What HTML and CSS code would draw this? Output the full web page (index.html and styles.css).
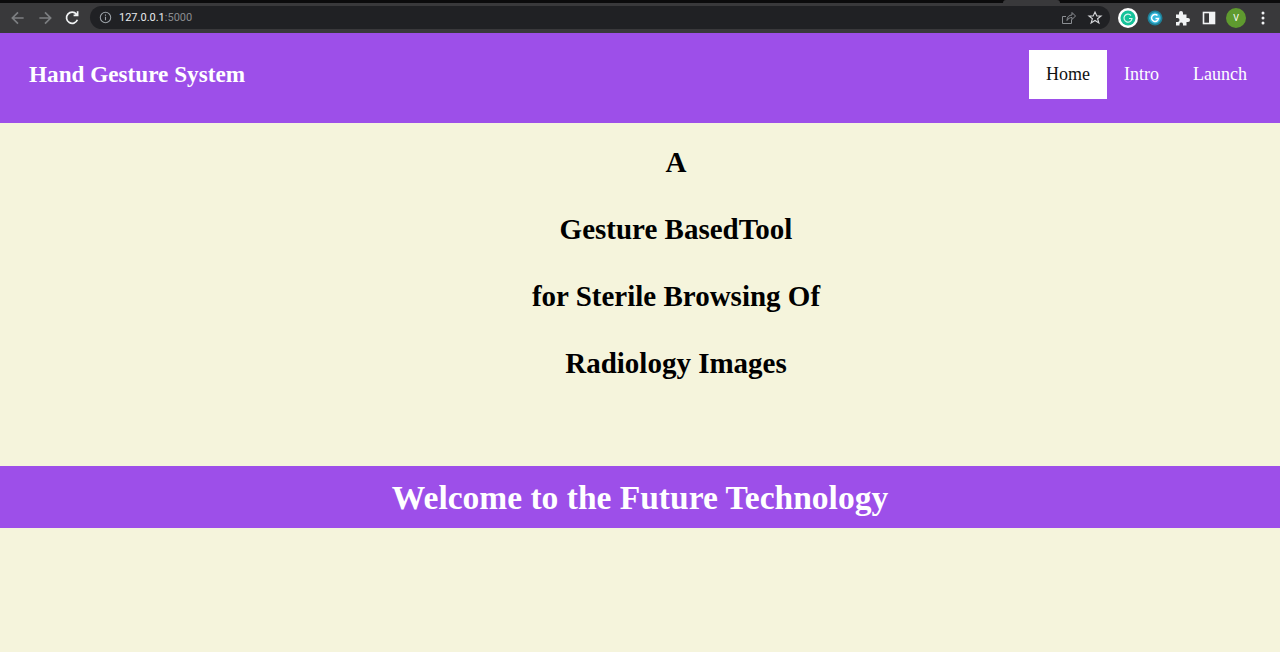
FILE: index.html
```html
<!DOCTYPE html>
<html lang="en">
<head>
    <meta charset="UTF-8">
    <meta name="viewport" content="width=device-width, initial-scale=1.0">
    <title>Hand Gesture System</title>
    <link rel="stylesheet" href="styles.css">
</head>
<body>
    <div class="browser-bar">
        <div class="tab-strip"><div class="tab"></div></div>
        <div class="toolbar">
            <svg class="tool-icon dim" viewBox="0 0 16 16"><path d="M13 8H3.500M8 3 3 8l5 5"/></svg>
            <svg class="tool-icon dim" viewBox="0 0 16 16"><path d="M3 8h9.500M8 3l5 5-5 5"/></svg>
            <svg class="tool-icon" viewBox="0 0 16 16"><path d="M12.800 9.600A5 5 0 1 1 12 4.600M13 2v3.600H9.400"/></svg>
            <div class="address">
                <svg class="info-icon" viewBox="0 0 12 12"><circle cx="6" cy="6" r="4.800"/><path d="M6 5.400v3.200M6 3.200v1.200"/></svg>
                <span class="host">127.0.0.1</span><span class="port">:5000</span>
                <div class="address-end">
                    <svg class="small-icon" viewBox="0 0 16 16"><path d="M11.500 9.500V13.500H2.500V6.500H6M7 10.500c0-3.500 2-5.500 5-5.500V2.500L15.500 6 12 9.500V7.500c-2 0-4 1-5 3z"/></svg>
                    <svg class="small-icon bright" viewBox="0 0 16 16"><path d="m8 2 1.800 4h4.200l-3.400 2.700 1.300 4.300L8 10.500 4.100 13l1.300-4.300L2 6h4.200z"/></svg>
                </div>
            </div>
            <div class="extensions">
                <svg class="ext" viewBox="0 0 20 20"><circle cx="10" cy="10" r="10" fill="#fff"/><circle cx="10" cy="10" r="7.500" fill="#15c39a"/><path d="M13 7.500A4 4 0 1 0 14 10.500h-3" fill="none" stroke="#d8f5ee" stroke-width="1.200"/></svg>
                <svg class="ext" viewBox="0 0 20 20"><circle cx="10" cy="10" r="7.500" fill="#1f7f96"/><circle cx="10" cy="10" r="5.800" fill="#35b8dc"/><path d="M12.500 7.500A3.500 3.500 0 1 0 13.500 10.500h-3" fill="none" stroke="#fff" stroke-width="1.500"/></svg>
                <svg class="ext" viewBox="0 0 20 20"><path fill="#f1f3f4" d="M4 6.500h3V5a2 2 0 0 1 4 0v1.500h3.500V10H16a2 2 0 0 1 0 4h-1.500v3.500H11V16a1.800 1.800 0 0 0-3.500 0v1.500H4V14h1.500a2 2 0 0 0 0-4H4z"/></svg>
                <svg class="ext" viewBox="0 0 20 20"><rect x="4.500" y="4.500" width="11" height="11" fill="none" stroke="#f1f3f4" stroke-width="1.600"/><rect x="10" y="4.500" width="5.500" height="11" fill="#f1f3f4"/></svg>
                <div class="avatar">V</div>
                <svg class="ext" viewBox="0 0 20 20"><circle cx="10" cy="5" r="1.500" fill="#f1f3f4"/><circle cx="10" cy="10" r="1.500" fill="#f1f3f4"/><circle cx="10" cy="15" r="1.500" fill="#f1f3f4"/></svg>
            </div>
        </div>
    </div>

    <nav class="navbar">
        <a class="brand" href="#">Hand Gesture System</a>
        <ul class="nav-links">
            <li><a class="active" href="#">Home</a></li>
            <li><a href="#">Intro</a></li>
            <li><a href="#">Launch</a></li>
        </ul>
    </nav>

    <section class="hero">
        <h2>A</h2>
        <h2>Gesture BasedTool</h2>
        <h2>for Sterile Browsing Of</h2>
        <h2>Radiology Images</h2>
    </section>

    <div class="banner">Welcome to the Future Technology</div>
</body>
</html>
```

FILE: styles.css
```css
body {
    margin: 0;
    height: 652px;
    overflow: hidden;
    background-color: #f5f4dc;
    font-family: "Liberation Serif", serif;
}
.browser-bar {
    height: 33px;
    background-color: #39393b;
}
.tab-strip {
    height: 3px;
    background-color: #0b0b0c;
}
.tab {
    width: 57px;
    height: 3px;
    margin-left: 1003px;
    background-color: #39393b;
    border-radius: 6px 6px 0 0;
}
.toolbar {
    height: 29px;
    display: flex;
    align-items: center;
    padding: 0 0 1px 9px;
}
.tool-icon {
    width: 18px;
    height: 18px;
    margin-right: 9px;
    fill: none;
    stroke: #f1f3f4;
    stroke-width: 1.500;
}
.tool-icon.dim {
    stroke: #7d7f82;
}
.address {
    flex: 1;
    height: 23px;
    padding-left: 9px;
    display: flex;
    align-items: center;
    background-color: #202124;
    border-radius: 12px;
    font-family: Roboto, sans-serif;
    font-size: 11px;
}
.info-icon {
    width: 13px;
    height: 13px;
    margin-right: 7px;
    fill: none;
    stroke: #9aa0a6;
    stroke-width: 1;
}
.host {
    color: #e8eaed;
}
.port {
    color: #8a8c8f;
}
.address-end {
    margin-left: auto;
    display: flex;
    align-items: center;
    gap: 11px;
    padding-right: 7px;
}
.small-icon {
    width: 16px;
    height: 16px;
    fill: none;
    stroke: #8b8e92;
    stroke-width: 1;
}
.small-icon.bright {
    stroke: #d5d7da;
    stroke-width: 1.100;
}
.extensions {
    display: flex;
    align-items: center;
    gap: 7px;
    padding: 0 7px 0 8px;
}
.ext {
    width: 20px;
    height: 20px;
}
.avatar {
    width: 20px;
    height: 20px;
    border-radius: 50%;
    background-color: #5f9a2f;
    color: #fff;
    font-family: Roboto, sans-serif;
    font-size: 9px;
    line-height: 20px;
    text-align: center;
}
.navbar {
    height: 90px;
    box-sizing: border-box;
    display: flex;
    align-items: center;
    justify-content: space-between;
    padding: 0 16px 7px 29px;
    background-color: #9d4fe9;
}
.brand {
    color: #fff;
    font-size: 23.200px;
    font-weight: bold;
    text-decoration: none;
}
.nav-links {
    display: flex;
    list-style: none;
    margin: 0;
    padding: 0;
}
.nav-links a {
    display: block;
    padding: 0 17px;
    line-height: 49px;
    color: #fff;
    font-size: 18px;
    text-decoration: none;
}
.nav-links a.active {
    background-color: #fff;
    color: #111;
}
.hero {
    height: 343px;
    box-sizing: border-box;
    padding: 22px 0 0 72px;
    text-align: center;
}
.hero h2 {
    margin: 0 0 33px;
    font-size: 29px;
    line-height: 34px;
    color: #000;
}
.banner {
    height: 62px;
    line-height: 63px;
    background-color: #9d4fe9;
    color: #fff;
    font-size: 33.500px;
    font-weight: bold;
    text-align: center;
}
```
